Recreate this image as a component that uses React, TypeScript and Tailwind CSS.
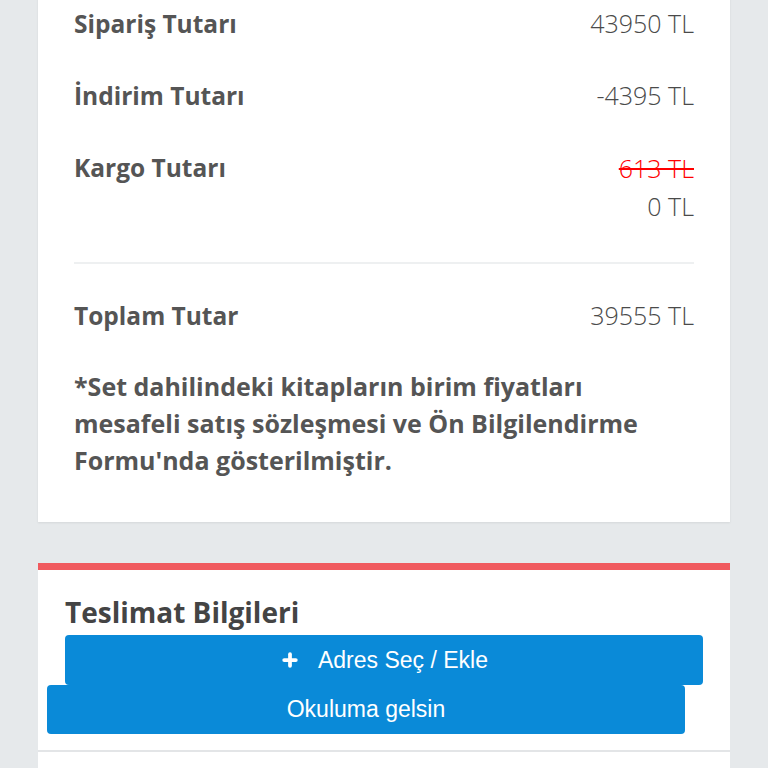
import { Plus } from 'lucide-react';

const rows = [
  { label: 'Sipariş Tutarı', value: '43950 TL' },
  { label: 'İndirim Tutarı', value: '-4395 TL' },
];

export default function App() {
  return (
    <div className="h-[768px] w-[768px] overflow-hidden bg-[#e6e9eb] px-[38px] font-['Open_Sans',sans-serif]">
      {/* Sipariş özeti */}
      <div className="-mt-[12px] bg-white px-[36px] pb-[43px] shadow-[0_1px_2px_rgba(0,0,0,0.08)]">
        {rows.map((r) => (
          <div key={r.label} className="flex h-[72px] items-center justify-between">
            <span className="text-[24.5px] font-bold text-[#555]">{r.label}</span>
            <span className="text-[25px] font-light text-[#4a4a4a]">{r.value}</span>
          </div>
        ))}
        <div className="flex justify-between pt-[21px]">
          <span className="text-[24.5px] font-bold leading-[30px] text-[#555]">Kargo Tutarı</span>
          <div className="flex flex-col items-end">
            <span className="text-[25px] font-light leading-[30px] text-[#f00] line-through">613 TL</span>
            <span className="mt-[8px] text-[25px] font-light leading-[30px] text-[#4a4a4a]">0 TL</span>
          </div>
        </div>
        <div className="mt-[41px] h-[2px] bg-[#eef0f1]" />
        <div className="flex h-[104px] items-center justify-between">
          <span className="text-[24.5px] font-bold text-[#555]">Toplam Tutar</span>
          <span className="text-[25px] font-light text-[#4a4a4a]">39555 TL</span>
        </div>
        <p className="text-[25px] font-bold leading-[37px] text-[#555]">
          *Set dahilindeki kitapların birim fiyatları
          <br />
          mesafeli satış sözleşmesi ve Ön Bilgilendirme
          <br />
          Formu'nda gösterilmiştir.
        </p>
      </div>

      {/* Teslimat */}
      <div className="mt-[41px] border-t-[7px] border-[#f05a5e] bg-white">
        <div className="px-[27px] pt-[25px] pb-[16px]">
          <h2 className="text-[28px] font-bold leading-[34px] text-[#444]">Teslimat Bilgileri</h2>
          <button className="mt-[6px] flex h-[50px] w-[638px] items-center justify-center gap-[18px] rounded-[4px] bg-[#0a8ad8] font-['Liberation_Sans',sans-serif] text-[23px] text-white">
            <Plus className="h-[20px] w-[20px]" strokeWidth={4.5} />
            Adres Seç / Ekle
          </button>
          <button className="-ml-[18px] flex h-[49px] w-[638px] items-center justify-center rounded-[4px] bg-[#0a8ad8] font-['Liberation_Sans',sans-serif] text-[23px] text-white">
            Okuluma gelsin
          </button>
        </div>
        <div className="h-[2px] bg-[#e3e5e7]" />
        <div className="h-[40px]" />
      </div>
    </div>
  );
}
